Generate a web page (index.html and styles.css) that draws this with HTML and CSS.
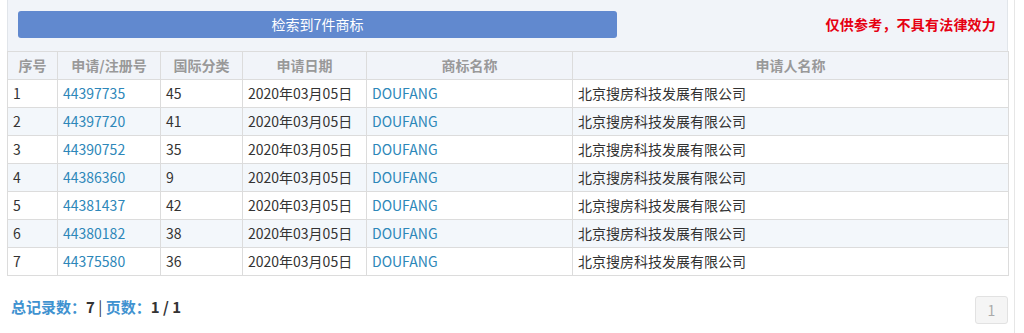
FILE: index.html
```html
<!DOCTYPE html>
<html lang="zh-CN">
<head>
<meta charset="utf-8">
<title>商标检索结果</title>
<link rel="stylesheet" href="styles.css">
</head>
<body>
<div class="page">
  <div class="content">
    <div class="toolbar">
      <div class="result-bar">检索到7件商标</div>
      <div class="notice">仅供参考，不具有法律效力</div>
    </div>
    <table class="grid">
      <colgroup>
        <col class="c1"><col class="c2"><col class="c3"><col class="c4"><col class="c5"><col class="c6">
      </colgroup>
      <thead>
        <tr><th>序号</th><th>申请/注册号</th><th>国际分类</th><th>申请日期</th><th>商标名称</th><th>申请人名称</th></tr>
      </thead>
      <tbody>
        <tr><td>1</td><td><a class="lnk">44397735</a></td><td>45</td><td>2020年03月05日</td><td><a class="lnk">DOUFANG</a></td><td>北京搜房科技发展有限公司</td></tr>
        <tr><td>2</td><td><a class="lnk">44397720</a></td><td>41</td><td>2020年03月05日</td><td><a class="lnk">DOUFANG</a></td><td>北京搜房科技发展有限公司</td></tr>
        <tr><td>3</td><td><a class="lnk">44390752</a></td><td>35</td><td>2020年03月05日</td><td><a class="lnk">DOUFANG</a></td><td>北京搜房科技发展有限公司</td></tr>
        <tr><td>4</td><td><a class="lnk">44386360</a></td><td>9</td><td>2020年03月05日</td><td><a class="lnk">DOUFANG</a></td><td>北京搜房科技发展有限公司</td></tr>
        <tr><td>5</td><td><a class="lnk">44381437</a></td><td>42</td><td>2020年03月05日</td><td><a class="lnk">DOUFANG</a></td><td>北京搜房科技发展有限公司</td></tr>
        <tr><td>6</td><td><a class="lnk">44380182</a></td><td>38</td><td>2020年03月05日</td><td><a class="lnk">DOUFANG</a></td><td>北京搜房科技发展有限公司</td></tr>
        <tr><td>7</td><td><a class="lnk">44375580</a></td><td>36</td><td>2020年03月05日</td><td><a class="lnk">DOUFANG</a></td><td>北京搜房科技发展有限公司</td></tr>
      </tbody>
    </table>
    <div class="footer">
      <div class="summary"><span class="lbl">总记录数：</span><b>7</b> <span class="sep">|</span> <span class="lbl">页数：</span><b>1 / 1</b></div>
      <div class="pager"><span class="page-btn">1</span></div>
    </div>
  </div>
</div>
</body>
</html>
```

FILE: styles.css
```css
html, body {
  margin: 0;
  padding: 0;
  background: #ffffff;
}
body {
  font-family: "Noto Sans CJK SC", "Open Sans", sans-serif;
  font-size: 14px;
  color: #333;
}
.page {
  width: 1015px;
  height: 333px;
  border-right: 1px solid #e6e6e6;
  box-sizing: border-box;
  overflow: hidden;
}
.content {
  margin-left: 7px;
  width: 1001px;
}
.toolbar {
  height: 51px;
  box-sizing: border-box;
  background: #f1f4f9;
  border-left: 1px solid #e1e5ea;
  border-right: 1px solid #e1e5ea;
  display: flex;
  align-items: flex-start;
  justify-content: space-between;
  padding: 11px 11px 0 10px;
}
.result-bar {
  width: 599px;
  height: 27px;
  background: #6189cf;
  border-radius: 3px;
  color: #fff;
  font-size: 14px;
  line-height: 27px;
  text-align: center;
}
.notice {
  color: #e60012;
  font-weight: bold;
  font-size: 14px;
  line-height: 27px;
  letter-spacing: 0.2px;
}
.grid {
  width: 1001px;
  border-collapse: collapse;
  table-layout: fixed;
}
.c1 { width: 50px; }
.c2 { width: 103px; }
.c3 { width: 82px; }
.c4 { width: 124px; }
.c5 { width: 206px; }
.c6 { width: 436px; }
.grid th, .grid td {
  border: 1px solid #dcdcdc;
  height: 28px;
  padding: 0 0 0 5px;
  box-sizing: border-box;
  line-height: 27px;
  white-space: nowrap;
  overflow: hidden;
}
.grid th {
  background: #f1f4f9;
  color: #999;
  font-weight: bold;
  font-size: 14px;
  text-align: center;
  padding: 0;
}
.grid td {
  color: #333;
  font-size: 14px;
}
.grid tbody tr:nth-child(even) td {
  background: #f3f7fb;
}
.lnk {
  color: #2d87b9;
  text-decoration: none;
}
.footer {
  display: flex;
  justify-content: space-between;
  align-items: center;
  padding: 20px 0 0 4px;
}
.summary {
  font-size: 15px;
  color: #333;
  margin-top: -7px;
}
.summary .lbl {
  color: #3f92d0;
  font-weight: bold;
}
.summary b {
  color: #333;
}
.summary .sep {
  color: #333;
}
.page-btn {
  display: block;
  width: 33px;
  height: 28px;
  box-sizing: border-box;
  border: 1px solid #e2e2e2;
  border-radius: 3px;
  background: #f5f5f5;
  color: #aaa;
  text-align: center;
  line-height: 26px;
  font-size: 14px;
}
```
